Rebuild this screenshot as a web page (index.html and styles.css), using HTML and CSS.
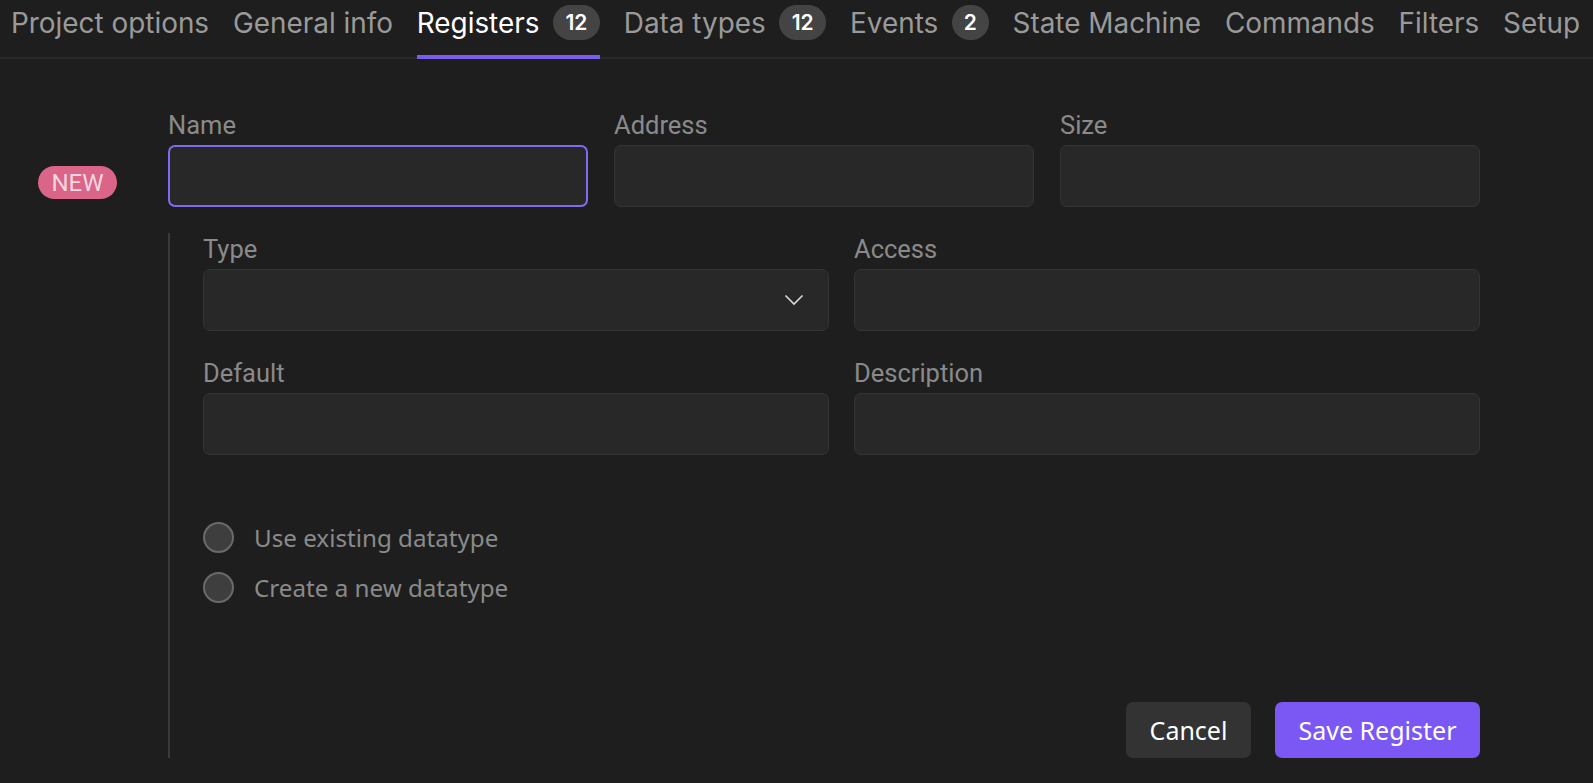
FILE: index.html
```html
<!DOCTYPE html>
<html>
<head>
<meta charset="utf-8">
<link rel="stylesheet" href="styles.css">
</head>
<body>
<nav class="tabs">
  <div class="tab">Project options</div>
  <div class="tab">General info</div>
  <div class="tab active">Registers <span class="count">12</span></div>
  <div class="tab">Data types <span class="count">12</span></div>
  <div class="tab">Events <span class="count small">2</span></div>
  <div class="tab">State Machine</div>
  <div class="tab">Commands</div>
  <div class="tab">Filters</div>
  <div class="tab">Setup</div>
</nav>
<main class="editor">
  <div class="badge-col"><span class="new">NEW</span></div>
  <div class="form">
    <div class="row3">
      <div class="field"><label>Name</label><div class="input focus"></div></div>
      <div class="field"><label>Address</label><div class="input"></div></div>
      <div class="field"><label>Size</label><div class="input"></div></div>
    </div>
    <div class="sub">
      <div class="row2">
        <div class="field"><label>Type</label>
          <div class="input select">
            <svg width="20" height="12" viewBox="0 0 20 12"><path d="M1.5 1.5 L10 10 L18.5 1.5" fill="none" stroke="#d8d8d8" stroke-width="1.6"/></svg>
          </div>
        </div>
        <div class="field"><label>Access</label><div class="input"></div></div>
        <div class="field"><label>Default</label><div class="input"></div></div>
        <div class="field"><label>Description</label><div class="input"></div></div>
      </div>
      <div class="radios">
        <div class="radio"><span class="dot"></span>Use existing datatype</div>
        <div class="radio"><span class="dot"></span>Create a new datatype</div>
      </div>
      <div class="actions">
        <button class="btn cancel">Cancel</button>
        <button class="btn save">Save Register</button>
      </div>
    </div>
  </div>
</main>
</body>
</html>
```
FILE: styles.css
```css
* { box-sizing: border-box; }
html, body { margin: 0; padding: 0; }
body {
  background: #1e1e1e;
  width: 1593px;
  height: 783px;
  overflow: hidden;
  font-family: Inter, "Noto Sans", sans-serif;
}
.tabs {
  display: flex;
  align-items: stretch;
  height: 59px;
  border-bottom: 2px solid #2a2a2a;
  padding-left: 11px;
  gap: 23.8px;
}
.tab {
  display: flex;
  align-items: center;
  gap: 13.5px;
  font-size: 27.9px;
  color: #9a9a9a;
  padding-bottom: 10px;
  border-bottom: 4px solid transparent;
  margin-bottom: -2px;
  white-space: nowrap;
}
.tab.active {
  color: #ffffff;
  border-bottom-color: #7b5cf0;
}
.count {
  display: inline-flex;
  align-items: center;
  justify-content: center;
  background: #444444;
  color: #ffffff;
  font-size: 21px;
  font-weight: 600;
  height: 35px;
  min-width: 47px;
  padding: 0 10px;
  border-radius: 18px;
}
.count.small { min-width: 37px; padding: 0; }
.editor {
  display: flex;
  padding-top: 54px;
}
.badge-col {
  width: 168px;
  padding-left: 38px;
  padding-top: 53px;
}
.new {
  display: inline-flex;
  align-items: center;
  justify-content: center;
  width: 79px;
  height: 33px;
  border-radius: 17px;
  background: #db6489;
  color: #f3d6df;
  font-family: Roboto, sans-serif;
  font-size: 24px;
}
.form { width: 1312px; }
.row3 {
  display: grid;
  grid-template-columns: repeat(3, 1fr);
  gap: 26px;
}
.field label {
  display: block;
  font-family: Roboto, sans-serif;
  font-size: 25.5px;
  color: #8a8a8a;
  height: 32px;
  line-height: 25px;
}
.input {
  height: 62px;
  background: #282828;
  border: 1.5px solid #343434;
  border-radius: 7px;
}
.input.focus { border: 2px solid #7d6cf2; }
.select {
  display: flex;
  align-items: center;
  justify-content: flex-end;
  padding-right: 24px;
}
.sub {
  margin-top: 26px;
  border-left: 2px solid #3a3a3a;
  padding-left: 33px;
  padding-top: 4px;
  height: 525px;
  display: flex;
  flex-direction: column;
}
.row2 {
  display: grid;
  grid-template-columns: repeat(2, 1fr);
  column-gap: 25px;
  row-gap: 30px;
}
.radios {
  margin-top: 67px;
  display: flex;
  flex-direction: column;
  gap: 19px;
}
.radio {
  display: flex;
  align-items: center;
  gap: 20px;
  font-family: "Noto Sans", sans-serif;
  font-size: 24.2px;
  color: #8a8a8a;
  height: 31px;
}
.dot {
  width: 31px;
  height: 31px;
  border-radius: 50%;
  background: #3e3e3e;
  border: 2px solid #6a6a6a;
}
.actions {
  margin-top: auto;
  display: flex;
  justify-content: flex-end;
  gap: 24px;
}
.btn {
  height: 56px;
  border: none;
  border-radius: 7px;
  font-family: "Noto Sans", sans-serif;
  font-size: 25px;
  color: #ffffff;
  padding: 0;
}
.cancel { background: #333333; width: 125px; }
.save { background: #7b57f3; width: 205px; }
```
